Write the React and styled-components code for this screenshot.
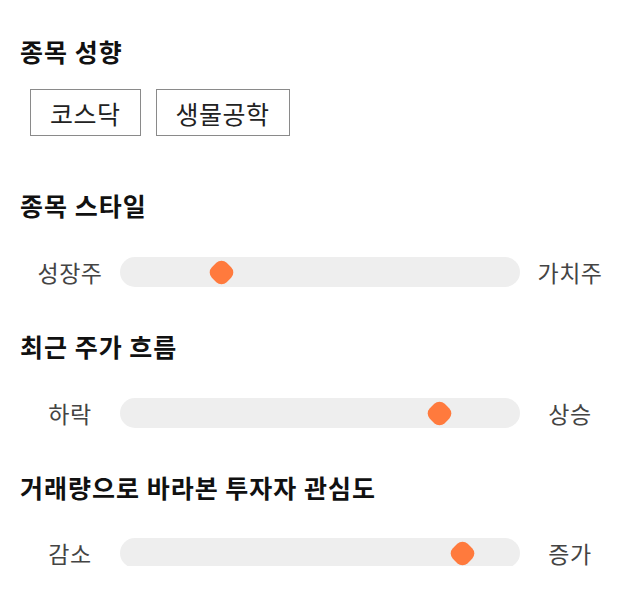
import styled, { createGlobalStyle } from "styled-components";

const GlobalStyle = createGlobalStyle`
    body {
        margin: 0;
        background: #fff;
        font-family: "Noto Sans CJK KR", "Noto Sans", sans-serif;
        color: #111;
    }
`;

const Page = styled.div`
    padding: 29px 20px 0 20px;
    width: 600px;
`;

const Section = styled.section`
    margin-bottom: ${(p) => p.gap || 0}px;
`;

const Title = styled.h2`
    margin: 0;
    font-size: 25px;
    letter-spacing: 1px;
    font-weight: 700;
    line-height: 44px;
    color: #111;
`;

const TagRow = styled.div`
    display: flex;
    gap: 15px;
    padding: 16px 0 0 10px;
`;

const Tag = styled.div`
    border: 1px solid #8a8a8a;
    height: 45px;
    padding: 0 19px;
    display: flex;
    align-items: center;
    font-size: 25px;
    letter-spacing: 0.5px;
    color: #222;
`;

const SliderRow = styled.div`
    display: grid;
    grid-template-columns: 100px 400px 100px;
    align-items: center;
    height: 30px;
    margin-top: ${(p) => p.top}px;
`;

const Label = styled.div`
    text-align: center;
    font-size: 23px;
    letter-spacing: 0.5px;
    color: #444;
`;

const Track = styled.div`
    position: relative;
    height: 30px;
    background: #eeeeee;
    border-radius: 15px;
`;

const Thumb = styled.div`
    position: absolute;
    top: 50%;
    width: 21px;
    height: 21px;
    margin-left: -10.5px;
    margin-top: -10.5px;
    background: #ff7a3d;
    border-radius: 35%;
    transform: rotate(45deg);
`;

const Slider = ({ left, right, value, top }) => (
    <SliderRow top={top}>
        <Label>{left}</Label>
        <Track>
            <Thumb style={{ left: `${value}%` }} />
        </Track>
        <Label>{right}</Label>
    </SliderRow>
);

export default function App() {
    return (
        <Page>
            <GlobalStyle />
            <Section gap={47}>
                <Title>종목 성향</Title>
                <TagRow>
                    <Tag>코스닥</Tag>
                    <Tag>생물공학</Tag>
                </TagRow>
            </Section>
            <Section gap={39}>
                <Title>종목 스타일</Title>
                <Slider left="성장주" right="가치주" value={25.25} top={28} />
            </Section>
            <Section gap={39}>
                <Title>최근 주가 흐름</Title>
                <Slider left="하락" right="상승" value={79.75} top={28} />
            </Section>
            <Section>
                <Title>거래량으로 바라본 투자자 관심도</Title>
                <Slider left="감소" right="증가" value={85.5} top={27} />
            </Section>
        </Page>
    );
}
